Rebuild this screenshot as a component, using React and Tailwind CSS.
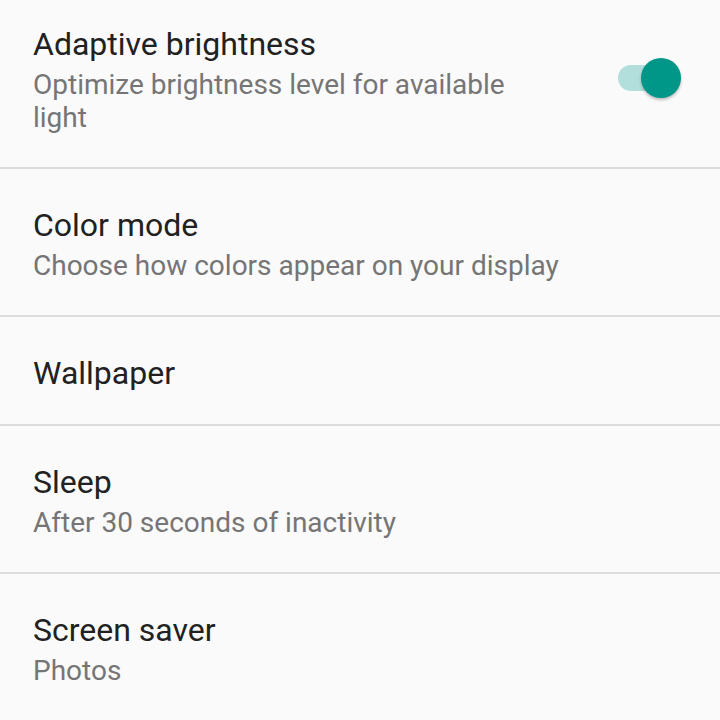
import React from "react";

const rows = [
  { title: "Color mode", summary: "Choose how colors appear on your display" },
  { title: "Wallpaper" },
  { title: "Sleep", summary: "After 30 seconds of inactivity" },
  { title: "Screen saver", summary: "Photos" },
];

function Toggle() {
  return (
    <div className="relative w-[63px] h-[40px] shrink-0">
      <div className="absolute left-0 top-[7px] w-[58px] h-[26px] rounded-full bg-[#b2dfdb]" />
      <div className="absolute right-0 top-0 w-[40px] h-[40px] rounded-full bg-[#009688] shadow-[0_2px_3px_rgba(0,0,0,0.25)]" />
    </div>
  );
}

function Row({ title, summary, first, children }) {
  return (
    <div
      className={`flex items-start justify-between border-b-2 border-[#dcdcdc] pl-[33px] pr-[39px] pb-[33px] ${
        first ? "pt-[26px]" : "pt-[38px]"
      }`}
    >
      <div className={children ? "w-[505px]" : "flex-1"}>
        <div className="text-[32px] leading-[36px] text-[#212121]">{title}</div>
        {summary && (
          <div className="mt-[6px] text-[28px] leading-[33px] text-[#757575]">{summary}</div>
        )}
      </div>
      {children}
    </div>
  );
}

export default function App() {
  return (
    <div
      className="w-[720px] h-[720px] overflow-hidden bg-[#fafafa]"
      style={{ fontFamily: "Roboto, 'Noto Sans', sans-serif" }}
    >
      <Row
        first
        title="Adaptive brightness"
        summary="Optimize brightness level for available light"
      >
        <div className="mt-[32px]">
          <Toggle />
        </div>
      </Row>
      {rows.map((r) => (
        <Row key={r.title} title={r.title} summary={r.summary} />
      ))}
    </div>
  );
}
